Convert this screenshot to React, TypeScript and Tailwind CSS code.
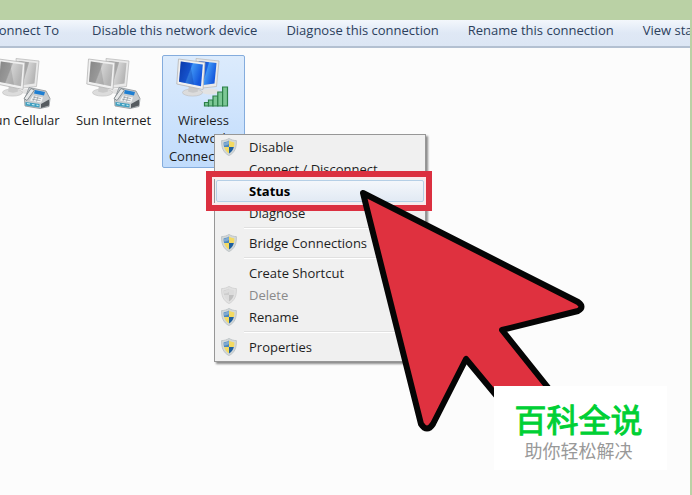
import React from "react";

function Shield({ muted = false }: { muted?: boolean }) {
  const blue = muted ? "#cdcdcd" : "#4a86bd";
  const gold = muted ? "#dcdcdc" : "#f3da62";
  return (
    <svg viewBox="0 0 16 18" className="h-[18px] w-4" aria-hidden="true">
      <path d="M8 .4C5.800 1.900 3.200 2.500.6 2.600c-.2 6.600 1.300 11.900 7.400 15 6.100-3.100 7.600-8.400 7.400-15C12.800 2.500 10.200 1.900 8 .4Z" fill={muted ? "#e2e2e2" : "#d3d8d8"} stroke={muted ? "#cacaca" : "#b0b8bb"} strokeWidth=".7" />
      <path d="M8 2.600C6.400 3.700 4.500 4.200 2.600 4.400c0 1.600.1 3.200.5 4.600H8Z" fill={blue} />
      <path d="M8 2.600c1.600 1.100 3.500 1.600 5.400 1.800 0 1.600-.1 3.200-.5 4.600H8Z" fill={gold} />
      <path d="M3.100 9c.8 3 2.300 5 4.900 6.500V9Z" fill={gold} />
      <path d="M12.900 9c-.8 3-2.300 5-4.900 6.500V9Z" fill={muted ? "#c0c0c0" : "#1f5f9e"} />
      <path d="M3 4.700c2-.3 3.500-.8 5-1.700v3C6.500 7 4.500 7.600 3 7.600Z" fill="#fff" opacity=".3" />
    </svg>
  );
}

function Screens({ active = false }: { active?: boolean }) {
  const id = active ? "screen-on" : "screen-off";
  return (
    <>
      <defs>
        <linearGradient id={id} x1="0" y1="0" x2="1" y2=".4">
          <stop offset="0" stopColor={active ? "#0c3cae" : "#8c8c8c"} />
          <stop offset=".5" stopColor={active ? "#1c62e0" : "#a8a8a8"} />
          <stop offset=".55" stopColor={active ? "#3f95f5" : "#d2d2d2"} />
          <stop offset="1" stopColor={active ? "#1457dc" : "#b4b4b4"} />
        </linearGradient>
      </defs>
      <ellipse cx="34" cy="35" rx="9" ry="3" fill="#e3e3e3" />
      <path d="M20 2 43 4.500 40.500 30 22 32Z" fill="#e9e9e9" stroke="#bdbdbd" strokeWidth=".8" />
      <path d="M22.500 4.500 40.500 6.500 38.500 27 24 29Z" fill={`url(#${id})`} />
      <ellipse cx="16.500" cy="36" rx="10" ry="3.600" fill="#dcdcdc" stroke="#bcbcbc" strokeWidth=".6" />
      <path d="M13 29h8l1 6c-3 1.500-7 1.500-10 0Z" fill="#c9c9c9" />
      <path d="M2.500 2.500 29 6 27 33 .8 27.500Z" fill="#f0f0f0" stroke="#b5b5b5" strokeWidth=".8" />
      <path d="M4.800 5 26.800 8 25 29.800 3 25.200Z" fill={`url(#${id})`} />
      <path d="M4.800 5 14 6.300 18 28.300 3 25.200Z" fill={active ? "#06309b" : "#777"} opacity=".3" />
    </>
  );
}

function DialUpIcon() {
  return (
    <svg viewBox="0 0 56 54" className="h-[55px] w-14" aria-hidden="true">
      <Screens />
      <path d="M33 31 50 34.500 54 42 53 50 44 52 29 49.500 28.500 43Z" fill="#c8cccf" stroke="#8b9297" strokeWidth=".8" />
      <path d="m35 32-7 10 3 2 7.500-10.500Z" fill="#e6e8e9" stroke="#757c80" strokeWidth=".8" />
      <path d="M39 33.500 49 35.500 48 39 38 37Z" fill="#1d7ed2" />
      <path d="m37 39 10 2-2 5-11-2Z" fill="#f4f5f5" />
      <path d="m37 40.500 8 1.600M36 42.600l8.500 1.700M39 39.500l-2 5M42 40l-1.500 5" stroke="#7c8a94" strokeWidth=".6" />
      <path d="M29.500 45.500 43.500 47.500v3.500l-14-2Z" fill="#3f9fc0" />
      <path d="m31 47 3 .5M36 48l2.500.4M40.500 48.700l2 .3" stroke="#c9edf4" strokeWidth="1.200" />
      <path d="m45 47.500 8-4.500v6l-8 2.500Z" fill="#555b60" />
    </svg>
  );
}

function WirelessIcon() {
  return (
    <svg viewBox="0 0 56 54" className="h-[55px] w-14" aria-hidden="true">
      <Screens active />
      <g fill="#7cc795" stroke="#2c8049" strokeWidth="1.200">
        <path d="M28.500 46h4v3.500h-4Z" />
        <path d="M32.500 43.500h4.500v6h-4.500Z" />
        <path d="M37 39.500h4.800v10H37Z" />
        <path d="M41.800 35.500h4.800v14h-4.800Z" />
        <path d="M46.600 30.500h4.900v19h-4.900Z" />
      </g>
    </svg>
  );
}

const toolbar = [
  "Disable this network device",
  "Diagnose this connection",
  "Rename this connection",
  "View status of this connection",
];

type Entry = { label: string; shield?: boolean; disabled?: boolean; active?: boolean };

const groups: Entry[][] = [
  [
    { label: "Disable", shield: true },
    { label: "Connect / Disconnect" },
    { label: "Status", active: true },
    { label: "Diagnose" },
  ],
  [{ label: "Bridge Connections", shield: true }],
  [
    { label: "Create Shortcut" },
    { label: "Delete", shield: true, disabled: true },
    { label: "Rename", shield: true },
  ],
  [{ label: "Properties", shield: true }],
];

function MenuRow({ label, shield, disabled, active }: Entry) {
  const tone = disabled
    ? "border-transparent text-[#8a8a8a]"
    : active
      ? "border-[#b5cfe6] bg-linear-to-b from-[#f4f7fb] to-[#e2eaf4] font-bold text-black"
      : "border-transparent text-[#1e1e1e]";
  return (
    <button
      type="button"
      role="menuitem"
      disabled={disabled}
      className={`flex h-[22px] w-full items-center rounded-xs border text-left ${tone}`}
    >
      <span className="flex w-8 shrink-0 pl-1">{shield && <Shield muted={disabled} />}</span>
      <span className="pt-0.5">{label}</span>
    </button>
  );
}

function ContextMenu() {
  return (
    <div
      role="menu"
      className="absolute top-[134px] left-[214px] w-[212px] border border-[#979797] bg-[#f0f0f0] px-px pt-px pb-[3px] shadow-[2px_2px_2px_rgba(0,0,0,0.45)]"
    >
      {groups.map((group, i) => (
        <div key={group[0].label}>
          {i > 0 && (
            <div role="separator" className="ml-7 flex h-2 items-center">
              <div className="h-0.5 w-full border-t border-b border-t-[#e0e0e0] border-b-white" />
            </div>
          )}
          {group.map((entry) => (
            <MenuRow key={entry.label} {...entry} />
          ))}
        </div>
      ))}
    </div>
  );
}

function Connection({ label, selected, children }: { label: string; selected?: boolean; children: React.ReactNode }) {
  return (
    <button
      type="button"
      className={`flex w-[83px] shrink-0 flex-col items-center self-start rounded-xs border pb-0.5 text-[#1c1c1c] ${
        selected ? "border-[#84acdd] bg-linear-to-b from-[#dcebfc] to-[#c1dcfc]" : "border-transparent"
      }`}
    >
      {children}
      <span className="leading-[18px]">{label}</span>
    </button>
  );
}

export default function App() {
  return (
    <div className="relative min-h-screen overflow-hidden bg-[#bad1a5] pt-5 pr-0.5 font-['Open_Sans','Noto_Sans_CJK_SC',sans-serif] text-[13px]">
      <main className="min-h-[475px] overflow-hidden bg-[#fcfcfc]">
        <nav className="flex h-7 items-center gap-[29px] overflow-hidden border-b-2 border-[#b3c0d1] bg-linear-to-b from-[#f3f7fc] via-[#dfe8f5] to-[#dce6f4] pb-1 whitespace-nowrap text-[#2c405c]">
          <div className="flex w-[63px] shrink-0 justify-end pr-1">
            <button type="button">Connect To</button>
          </div>
          {toolbar.map((label) => (
            <button key={label} type="button" className="shrink-0">
              {label}
            </button>
          ))}
        </nav>
        <section className="-ml-[18px] flex gap-[7px] pt-[7px]">
          <Connection label="Sun Cellular">
            <DialUpIcon />
          </Connection>
          <Connection label="Sun Internet">
            <DialUpIcon />
          </Connection>
          <Connection label="Wireless Network Connection" selected>
            <WirelessIcon />
          </Connection>
        </section>
      </main>

      <ContextMenu />
      <div className="pointer-events-none absolute top-[171px] left-[206px] h-10 w-[226px] border-[6px] border-[#db3040] shadow-[inset_0_0_0_2px_#fbe9ec]" />

      <svg viewBox="0 0 240 260" className="pointer-events-none absolute top-[180px] left-[350px] h-[260px] w-60" aria-hidden="true">
        <path
          d="M13 13 228 122Q235 127 228 131L152 150 220 235 170 244 116 179 83 244Q77 253 71 244Z"
          fill="#df313f"
          stroke="#050505"
          strokeWidth="6"
          strokeLinejoin="round"
        />
      </svg>

      <aside className="absolute top-[386px] left-[494px] flex h-[84px] w-[173px] flex-col items-center bg-white pt-4 pr-1">
        <strong className="text-[32px] leading-9 font-normal text-[#00d035] [-webkit-text-stroke:1px_#00d035]">百科全说</strong>
        <span className="text-[18px] leading-[26px] text-[#999]">助你轻松解决</span>
      </aside>
    </div>
  );
}
